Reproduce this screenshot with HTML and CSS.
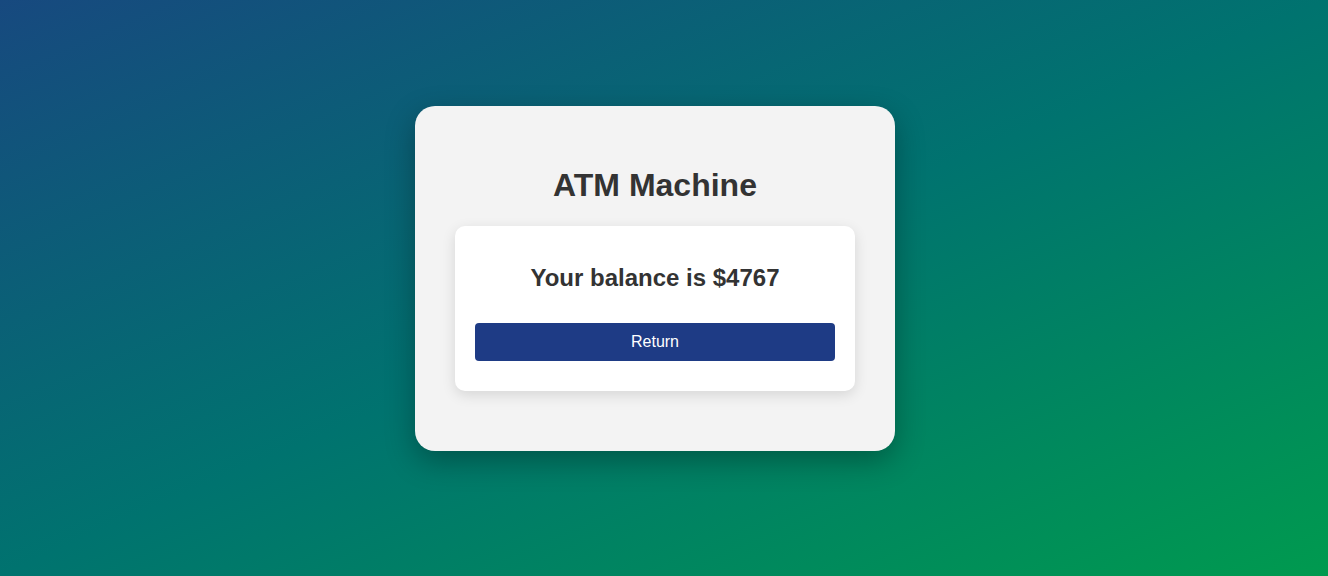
FILE: index.html
```html
<!DOCTYPE html>
<html lang="en">
<head>
<meta charset="utf-8">
<title>ATM Machine</title>
<link rel="stylesheet" href="styles.css">
</head>
<body>
<main class="page">
  <section class="atm">
    <h1 class="atm-title">ATM Machine</h1>
    <div class="panel">
      <h2 class="balance">Your balance is $4767</h2>
      <button class="btn" type="button">Return</button>
    </div>
  </section>
</main>
</body>
</html>
```

FILE: styles.css
```css
html, body {
  margin: 0;
  padding: 0;
  height: 100%;
}
body {
  font-family: "Liberation Sans", Arial, sans-serif;
  background: linear-gradient(to bottom right, #17497f 0%, #00736f 50%, #009a4f 100%);
  color: #333;
  overflow: hidden;
}
.page {
  height: 576px;
  box-sizing: border-box;
  display: flex;
  justify-content: center;
  align-items: flex-start;
  padding: 106px 18px 0 0;
}
.atm {
  width: 480px;
  height: 345px;
  box-sizing: border-box;
  background: #f3f3f3;
  border-radius: 20px;
  padding: 40px;
  box-shadow: 0 10px 30px rgba(0, 0, 0, 0.3);
  display: flex;
  flex-direction: column;
  align-items: stretch;
}
.atm-title {
  margin: 0;
  height: 80px;
  padding-top: 21px;
  box-sizing: border-box;
  font-size: 32px;
  font-weight: bold;
  text-align: center;
  color: #333;
  line-height: 37px;
}
.panel {
  background: #fff;
  border-radius: 10px;
  padding: 38px 20px 30px;
  box-shadow: 0 4px 14px rgba(0, 0, 0, 0.12);
  display: flex;
  flex-direction: column;
}
.balance {
  margin: 0 0 31px;
  font-size: 24px;
  line-height: 28px;
  font-weight: bold;
  text-align: center;
  color: #333;
}
.btn {
  height: 38px;
  border: none;
  border-radius: 4px;
  background: #1e3b85;
  color: #fff;
  font-family: "Liberation Sans", Arial, sans-serif;
  font-size: 16px;
  cursor: pointer;
}
```
